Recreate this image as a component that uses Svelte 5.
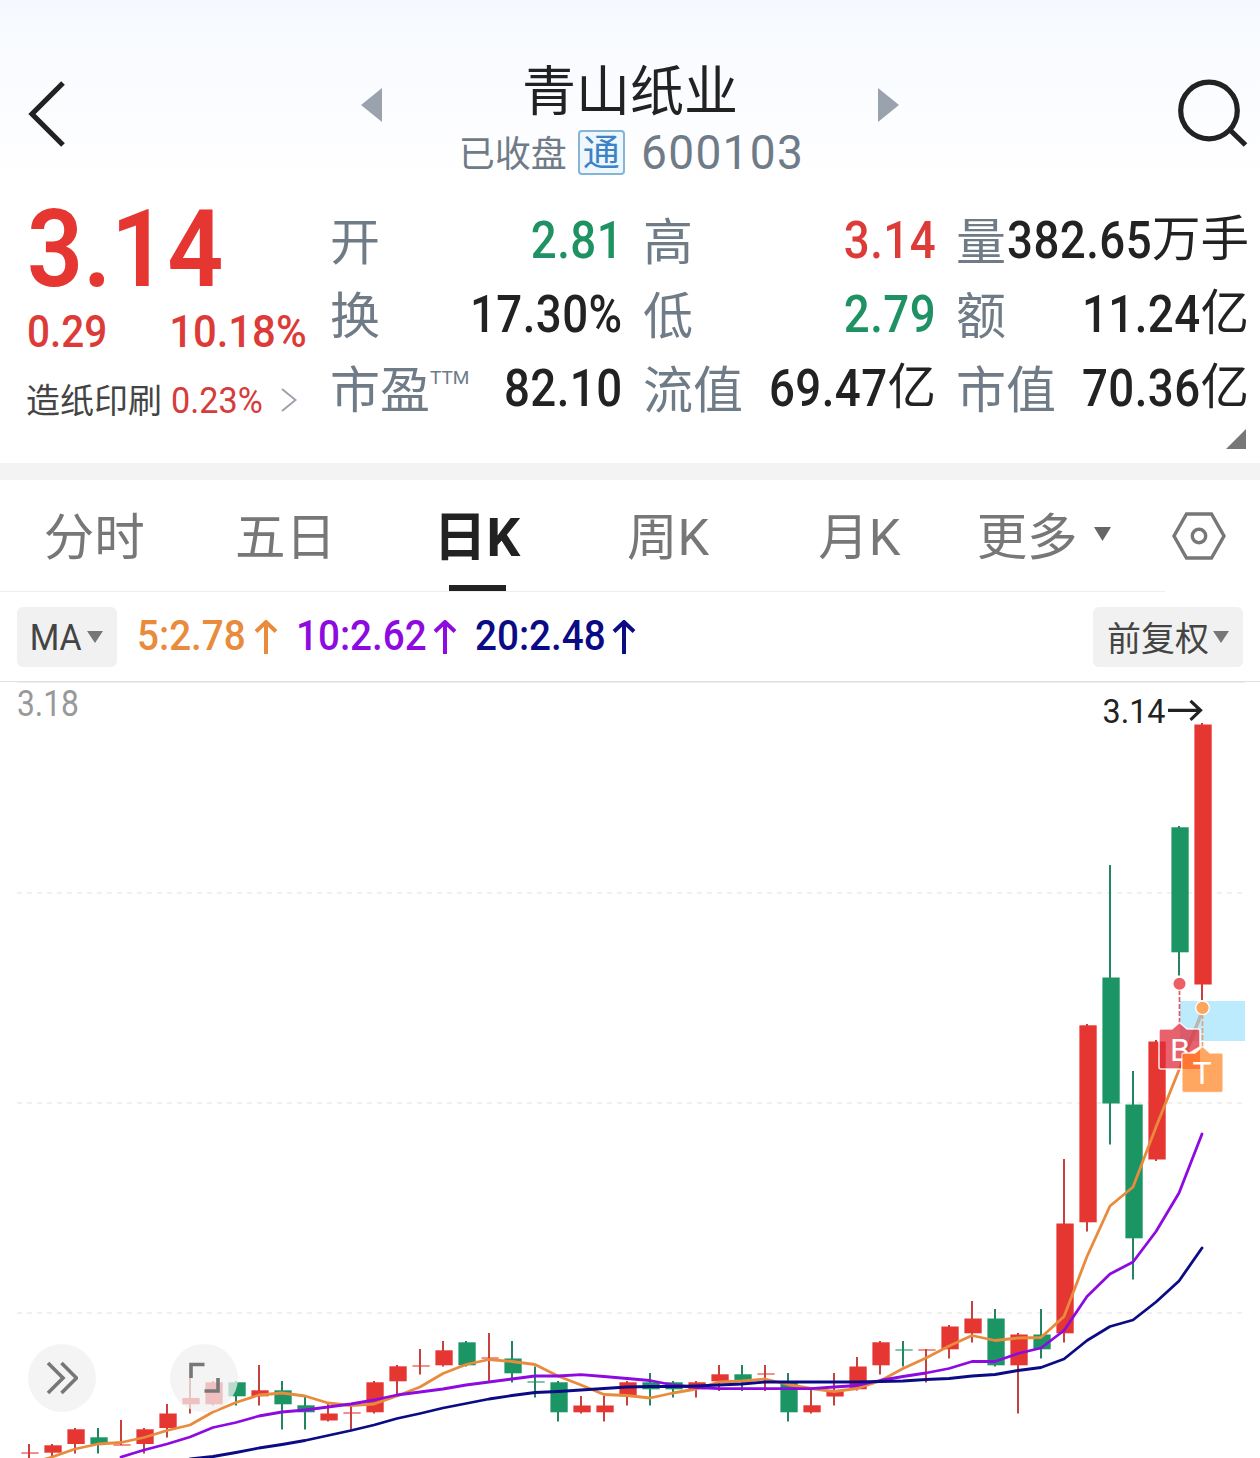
<script lang="ts">
    type Tone = "up" | "down" | "flat";

    const quotes: { label: string; sup?: string; value: string; unit?: string; tone: Tone }[] = [
        { label: "开", value: "2.81", tone: "down" },
        { label: "高", value: "3.14", tone: "up" },
        { label: "量", value: "382.65", unit: "万手", tone: "flat" },
        { label: "换", value: "17.30%", tone: "flat" },
        { label: "低", value: "2.79", tone: "down" },
        { label: "额", value: "11.24", unit: "亿", tone: "flat" },
        { label: "市盈", sup: "TTM", value: "82.10", tone: "flat" },
        { label: "流值", value: "69.47", unit: "亿", tone: "flat" },
        { label: "市值", value: "70.36", unit: "亿", tone: "flat" },
    ];

    const tabs = ["分时", "五日", "日K", "周K", "月K", "更多"];
    let activeTab = $state("日K");

    const averages = [
        { name: "ma5", text: "5:2.78" },
        { name: "ma10", text: "10:2.62" },
        { name: "ma20", text: "20:2.48" },
    ];

    const STEP = 23;
    const FIRST_X = 29;
    const xAt = (i: number) => FIRST_X + i * STEP;

    // [rising, body top, body bottom, high, low]
    const candles: [number, number, number, number, number][] = [
        [1, 1452, 1454, 1444, 1460],
        [1, 1445.3, 1452.7, 1444, 1460],
        [1, 1429.3, 1444, 1428, 1453.5],
        [0, 1437.3, 1444, 1428, 1453.5],
        [1, 1444, 1446, 1420, 1445],
        [1, 1429.3, 1444, 1428, 1453.5],
        [1, 1413.5, 1428, 1404, 1437.5],
        [1, 1398, 1404.3, 1377, 1413.5],
        [1, 1382.3, 1404.3, 1381, 1405.5],
        [0, 1382.3, 1396.3, 1381, 1405.5],
        [1, 1390.3, 1396.3, 1365, 1405.5],
        [0, 1390.3, 1404.3, 1381, 1429.5],
        [0, 1405.3, 1412.3, 1396, 1429.5],
        [1, 1413.5, 1420.5, 1404, 1421.5],
        [1, 1412, 1414, 1406, 1429.5],
        [1, 1382.3, 1412.3, 1381, 1413.5],
        [1, 1366.3, 1381.3, 1365, 1394],
        [1, 1365, 1367, 1349, 1374.5],
        [1, 1350.3, 1365.3, 1341, 1366.5],
        [0, 1342.3, 1365.3, 1341, 1366.5],
        [1, 1357, 1359, 1333, 1381],
        [0, 1358.5, 1373.3, 1341, 1382.5],
        [0, 1381, 1383, 1366.5, 1397.5],
        [0, 1382.3, 1412.3, 1381, 1421.5],
        [1, 1405.5, 1412.3, 1396, 1413.5],
        [1, 1405.5, 1412.3, 1396, 1421.5],
        [1, 1382.3, 1396.3, 1381, 1405.5],
        [0, 1382.3, 1389.3, 1373, 1405.5],
        [0, 1382.3, 1389.3, 1381, 1397.5],
        [1, 1382.3, 1389.3, 1381, 1397.5],
        [1, 1374.3, 1381.3, 1365, 1391],
        [0, 1374.3, 1381.3, 1365, 1391],
        [1, 1373, 1375, 1365, 1391],
        [0, 1382.3, 1412.3, 1373, 1421.5],
        [1, 1405.3, 1412.3, 1389, 1413.5],
        [1, 1390.5, 1396.5, 1373, 1405.5],
        [1, 1366.5, 1389.3, 1357, 1390.5],
        [1, 1342.3, 1365.3, 1341, 1374.5],
        [0, 1349, 1351, 1341, 1366.5],
        [1, 1349, 1351, 1349, 1382.5],
        [1, 1326.5, 1349.3, 1325, 1358.5],
        [1, 1318.5, 1333.3, 1301, 1342.5],
        [0, 1318.5, 1365.3, 1309, 1366.5],
        [1, 1334.5, 1365.3, 1333, 1413.5],
        [0, 1334.5, 1349.3, 1309, 1358.5],
        [1, 1223.5, 1333.3, 1159, 1342.5],
        [1, 1025.3, 1222.3, 1024, 1231.5],
        [0, 977.5, 1103.5, 865, 1144.5],
        [0, 1104.5, 1238.3, 1071, 1279.5],
        [1, 1041.5, 1159.5, 1040, 1161],
        [0, 827.3, 952.3, 826, 975.5],
        [1, 724.5, 984.5, 723, 1000],
    ];

    const ma5 = [
        1464, 1457, 1449, 1444, 1442.5, 1437.5, 1430.5, 1425, 1412, 1402.5, 1395, 1393, 1396, 1403,
        1405.5, 1404, 1396, 1387, 1373.5, 1364.5, 1359.5, 1361.5, 1364.5, 1376, 1385, 1394.5, 1395.5,
        1398, 1393, 1389, 1382, 1381, 1379, 1384.5, 1388.5, 1391.5, 1388.5, 1381, 1368.5, 1358, 1346,
        1335.5, 1340.5, 1338, 1337.5, 1316.5, 1256.5, 1206, 1187, 1127, 1070, 1012,
    ];
    const ma10 = [
        1457, 1450, 1444, 1437, 1427.5, 1422.5, 1416, 1412, 1410, 1407, 1404, 1400, 1395, 1392, 1389,
        1385, 1382, 1379, 1376, 1376, 1374.7, 1376.5, 1378.5, 1380.5, 1385, 1387.5, 1388.7, 1388.7,
        1388.7, 1388.7, 1388.7, 1387, 1385.5, 1380.5, 1376.5, 1373, 1368.5, 1361.5, 1361.5, 1353.5,
        1348, 1330.5, 1296.5, 1274, 1262, 1231.5, 1193, 1134,
    ];
    const ma20 = [
        1459, 1456.5, 1452.5, 1448, 1444.5, 1440.5, 1435.5, 1430.5, 1425, 1418.5, 1413.5, 1408, 1403.5,
        1399, 1395.5, 1392.5, 1391.5, 1390, 1388.5, 1387, 1386.5, 1386.5, 1386, 1385, 1384, 1382, 1382,
        1382, 1382, 1382, 1381.5, 1381, 1379.5, 1378.5, 1376, 1374.5, 1370.5, 1367.5, 1359, 1340.5,
        1326.5, 1320, 1302, 1281, 1248,
    ];

    // Every series ends on the last candle, so shorter ones start further right
    const toPoints = (ys: number[]) =>
        ys.map((y, i) => `${xAt(candles.length - ys.length + i)},${y}`).join(" ");
</script>

<main class="page">
    <header class="header">
        <button class="icon-button back" aria-label="返回">
            <svg width="40" height="68" viewBox="0 0 40 68">
                <path d="M36 3 L5 34 L36 65" class="stroke" />
            </svg>
        </button>
        <div class="stock-nav">
            <svg width="21" height="34" viewBox="0 0 21 34"><path d="M21 0 V34 L0 17 Z" fill="#9aa3ad" /></svg>
            <div class="stock">
                <h1>青山纸业</h1>
                <div class="stock-meta">
                    <span class="status">已收盘</span>
                    <span class="badge">通</span>
                    <span class="code num">600103</span>
                </div>
            </div>
            <svg width="21" height="34" viewBox="0 0 21 34"><path d="M0 0 V34 L21 17 Z" fill="#9aa3ad" /></svg>
        </div>
        <button class="icon-button search" aria-label="搜索">
            <svg width="72" height="68" viewBox="0 0 72 68">
                <circle cx="33" cy="31.5" r="28.3" class="stroke" />
                <path d="M54 51 L69.5 66" class="stroke" />
            </svg>
        </button>
    </header>

    <section class="quote">
        <div class="price-block">
            <div class="price num">3.14</div>
            <div class="change">
                <span class="num">0.29</span>
                <span class="num end">10.18%</span>
            </div>
            <div class="sector">
                <span class="sector-name">造纸印刷</span>
                <span class="sector-change num">0.23%</span>
                <svg width="16" height="24" viewBox="0 0 16 24">
                    <path d="M1 1 L14.5 12 L1 23" fill="none" stroke="#9aa3ad" stroke-width="2" />
                </svg>
            </div>
        </div>
        <div class="quote-grid">
            {#each quotes as q}
                <div class="quote-cell">
                    <span class="label">{q.label}{#if q.sup}<sup>{q.sup}</sup>{/if}</span>
                    <span class="value {q.tone}">
                        <span class="num end">{q.value}</span>{#if q.unit}<span class="unit">{q.unit}</span>{/if}
                    </span>
                </div>
            {/each}
        </div>
        <svg class="expand" width="20" height="20" viewBox="0 0 20 20"><path d="M20 0 V20 H0 Z" fill="#777" /></svg>
    </section>

    <nav class="tabs">
        <div class="tab-list">
            {#each tabs as tab}
                <button
                    class="tab"
                    class:active={tab === activeTab}
                    class:more={tab === "更多"}
                    onclick={() => (activeTab = tab)}
                >
                    <span>{tab}</span>
                    {#if tab === "更多"}
                        <svg width="17" height="14" viewBox="0 0 17 14"><path d="M0 0 H17 L8.5 14 Z" fill="#666" /></svg>
                    {/if}
                </button>
            {/each}
        </div>
        <button class="icon-button settings" aria-label="设置">
            <svg width="54" height="48" viewBox="0 0 54 48">
                <path d="M14.5 2 H39.5 L52 24 L39.5 46 H14.5 L2 24 Z" />
                <circle cx="27" cy="24" r="6.7" />
            </svg>
        </button>
    </nav>

    <div class="indicators">
        <button class="pill">
            <span class="pill-text">MA</span>
            <svg width="16" height="12" viewBox="0 0 16 12"><path d="M0 0 H16 L8 12 Z" fill="#777" /></svg>
        </button>
        <div class="averages">
            {#each averages as ma}
                <span class="average {ma.name}">
                    <span class="num">{ma.text}</span>
                    <svg width="24" height="34" viewBox="0 0 24 34"><path d="M12 34 V3 M2 11.5 L12 2 L22 11.5" /></svg>
                </span>
            {/each}
        </div>
        <button class="pill adjust">
            前复权
            <svg width="16" height="12" viewBox="0 0 16 12"><path d="M0 0 H16 L8 12 Z" fill="#777" /></svg>
        </button>
    </div>

    <div class="chart">
        <svg width="1260" height="776" viewBox="0 682 1260 776">
            <line x1="17" x2="1245" y1="682.5" y2="682.5" stroke="#ececec" />
            {#each [893, 1103, 1313] as y}
                <line x1="17" x2="1243" y1={y} y2={y} class="grid" />
            {/each}
            <text x="17" y="716" textLength="62" lengthAdjust="spacingAndGlyphs" class="axis-label">3.18</text>

            <rect x="1180" y="1001" width="65" height="40" fill="#bdebfe" />

            {#each candles as [rising, top, bottom, high, low], i}
                <g class:thin={bottom - top <= 2} class={rising ? "candle-up" : "candle-down"}>
                    <rect x={xAt(i) - 1} y={high} width="2" height={low - high} class="wick" />
                    <rect x={xAt(i) - 7.6} y={top} width="17.3" height={bottom - top} class="body" />
                </g>
            {/each}

            <polyline points={toPoints(ma5)} class="line ma5" />
            <path d="M1184 1058 L1202 1012" fill="none" stroke="#b9b9b1" stroke-width="3.4" />
            <polyline points={toPoints(ma10)} class="line ma10" />
            <polyline points={toPoints(ma20)} class="line ma20" />

            <text x="1102.5" y="723" textLength="63" lengthAdjust="spacingAndGlyphs" class="high-label">3.14</text>
            <path d="M1168 710.3 H1200 M1190.5 700.8 L1200.5 710.3 L1190.5 719.8" fill="none" stroke="#222" stroke-width="3.2" />

            <!-- trade markers -->
            <line x1="1179.5" x2="1179.5" y1="990" y2="1024" stroke="#dd5a68" stroke-width="1.7" stroke-dasharray="5 2" />
            <circle cx="1179.5" cy="983.7" r="6.7" fill="#ec6064" stroke="#fff" stroke-width="1.3" />
            <path d="M1161 1029 H1172 L1179.5 1022.5 L1187 1029 H1198 Q1200 1029 1200 1031 V1047 L1190 1053 L1182 1061 V1069 H1161 Q1159 1069 1159 1067 V1031 Q1159 1029 1161 1029 Z" fill="#e12c3c" fill-opacity=".75" stroke="#fff" stroke-opacity=".85" stroke-width="1.6" />
            <text x="1180" y="1060.5" class="marker-label">B</text>

            <line x1="1202.5" x2="1202.5" y1="1014" y2="1048" stroke="#e6a268" stroke-width="1.7" stroke-dasharray="5 2" />
            <circle cx="1202.5" cy="1007.8" r="6.8" fill="#ffa45c" stroke="#fff" stroke-width="1.3" />
            <path d="M1184 1053 H1195 L1202.5 1046.5 L1210 1053 H1221 Q1223 1053 1223 1055 V1090.5 Q1223 1092.5 1221 1092.5 H1184 Q1182 1092.5 1182 1090.5 V1055 Q1182 1053 1184 1053 Z" fill="#ff9d50" fill-opacity=".9" stroke="#fff" stroke-opacity=".7" stroke-width="1.4" />
            <path d="M1182.6 1054 H1195 L1200 1050 V1069 H1182.6 Z" fill="#ff5d17" fill-opacity=".65" />
            <text x="1202" y="1084" class="marker-label">T</text>
        </svg>

        <div class="chart-tools">
            <button class="tool" aria-label="快进">
                <svg width="32" height="34" viewBox="0 0 32 34"><path d="M2 2 L17 17 L2 32 M15.5 2 L30.5 17 L15.5 32" /></svg>
            </button>
            <button class="tool" aria-label="全屏">
                <svg width="32" height="34" viewBox="0 0 32 34"><path d="M3 17 V3.5 H16.5 M30 17 V30 H16.5" /></svg>
            </button>
        </div>
    </div>
</main>

<style>
    :global(body) {
        margin: 0;
        background: #fff;
    }

    .page {
        width: 1260px;
        height: 1458px;
        overflow: hidden;
        font-family: Roboto, "Noto Sans CJK SC", sans-serif;
        color: #222;
        background: linear-gradient(#f5f9ff 0, #fbfcff 90px, #fff 190px);
    }

    button {
        margin: 0;
        padding: 0;
        border: 0;
        background: none;
        font: inherit;
        color: inherit;
    }

    svg {
        display: block;
        flex: none;
    }

    /* condensed figures */
    .num {
        display: inline-block;
        transform: scaleX(0.92);
        transform-origin: left;
    }

    .num.end {
        transform-origin: right;
    }

    .header {
        display: grid;
        grid-template-columns: 1fr auto 1fr;
        height: 190px;
        box-sizing: border-box;
        padding: 56px 12px 0 27px;
    }

    .icon-button {
        display: flex;
    }

    .back {
        padding-top: 24px;
    }

    .search {
        justify-self: end;
        padding-top: 23px;
    }

    .stroke {
        fill: none;
        stroke: #222;
        stroke-width: 5.2;
    }

    .stock-nav {
        display: flex;
        align-items: flex-start;
        margin-right: 15px;
    }

    .stock-nav > svg {
        margin-top: 32px;
    }

    .stock {
        width: 496px;
        text-align: center;
    }

    h1 {
        margin: 0;
        padding-top: 3px;
        font-size: 54px;
        line-height: 67px;
        height: 65px;
        font-weight: 400;
    }

    .stock-meta {
        display: flex;
        justify-content: center;
        align-items: center;
        height: 56px;
        padding-left: 2px;
        color: #6f7b87;
    }

    .status {
        margin-top: -2px;
        font-size: 36px;
    }

    .badge {
        box-sizing: border-box;
        width: 47px;
        height: 45px;
        margin: 0 16px 0 11px;
        border: 2px solid #85b4d6;
        border-radius: 4px;
        background: #edf7fd;
        color: #3c82c4;
        font-size: 37px;
        line-height: 44px;
    }

    .code {
        margin-right: -11px;
        font-size: 49px;
        letter-spacing: 1.4px;
        transform: scaleX(0.94);
    }

    .quote {
        position: relative;
        display: flex;
        height: 273px;
        box-sizing: border-box;
        padding: 0 11px 0 27px;
    }

    .price-block {
        width: 304px;
        color: #e53632;
    }

    .price {
        height: 119px;
        font-size: 108px;
        line-height: 119px;
        font-weight: 600;
        transform: scaleX(0.91);
    }

    .change {
        display: flex;
        justify-content: space-between;
        width: 280px;
        font-size: 44px;
        line-height: 46px;
        font-weight: 500;
        color: #dc3b38;
    }

    .change .num {
        transform: scaleX(0.92);
    }

    .change .num.end {
        transform: scaleX(0.95);
    }

    .sector {
        display: flex;
        align-items: center;
        height: 76px;
        margin-top: 7px;
        font-size: 34px;
        color: #444;
    }

    .sector-name {
        margin: -4px 0 0 -1px;
    }

    .sector-change {
        margin: 2px 13px 0 9px;
        font-size: 36px;
        color: #d63c3c;
        transform: scaleX(0.95);
    }

    .quote-grid {
        display: grid;
        grid-template-columns: repeat(3, 291px);
        grid-auto-rows: 74px;
        column-gap: 22px;
        padding-top: 14px;
    }

    .quote-cell {
        display: flex;
        justify-content: space-between;
        align-items: center;
        white-space: nowrap;
    }

    .label {
        display: flex;
        margin: 4px 0 0 -1px;
        font-size: 50px;
        line-height: 74px;
        color: #6f7b87;
    }

    .label sup {
        margin-top: -13px;
        font-size: 19px;
        line-height: 74px;
    }

    .value {
        display: flex;
        justify-content: flex-end;
        width: 0;
        margin-right: -1px;
        font-size: 51px;
        line-height: 74px;
        font-weight: 500;
    }

    .value .num {
        transform: scaleX(0.895);
        letter-spacing: 0.5px;
    }

    .unit {
        margin-top: -1px;
        font-size: 48.5px;
        font-weight: 400;
    }

    .up {
        color: #dc3b38;
    }

    .down {
        color: #1f9263;
    }

    .expand {
        position: absolute;
        right: 14px;
        bottom: 14px;
    }

    .tabs {
        display: flex;
        height: 112px;
        border-top: 17px solid #f3f3f3;
    }

    .tab-list {
        display: flex;
        width: 1165px;
        box-sizing: border-box;
        border-bottom: 1px solid #eee;
    }

    .tab {
        position: relative;
        display: flex;
        justify-content: center;
        align-items: center;
        gap: 16px;
        width: 191.3px;
        box-sizing: border-box;
        padding-right: 3px;
        font-size: 50.5px;
        color: #777;
    }

    .tab span {
        margin-top: -5px;
    }

    .tab.active {
        font-size: 53px;
        font-weight: 700;
        color: #222;
    }

    .tab.active::after {
        content: "";
        position: absolute;
        bottom: 0;
        left: 66px;
        width: 57px;
        height: 6px;
        background: #222;
    }

    .tab.more {
        padding-right: 17px;
    }

    .more svg {
        margin-top: -3px;
    }

    .settings {
        align-items: center;
        margin-left: 7px;
    }

    .settings svg {
        fill: none;
        stroke: #777;
        stroke-width: 3.4;
    }

    .indicators {
        display: flex;
        align-items: center;
        height: 90px;
        box-sizing: border-box;
        padding: 0 17px;
        border-bottom: 1px solid #e2e2e2;
    }

    .pill {
        display: flex;
        align-items: center;
        justify-content: center;
        gap: 4px;
        width: 100px;
        height: 60px;
        border-radius: 6px;
        background: #f1f1f1;
        font-size: 36px;
        color: #444;
    }

    .pill-text {
        margin: 3px -1px 0 -3px;
        transform: scaleX(0.94);
    }

    .adjust {
        width: 150px;
        margin-left: auto;
        font-size: 34px;
    }

    .averages {
        display: flex;
        gap: 18px;
        margin-left: 20px;
    }

    .average {
        display: flex;
        align-items: center;
        gap: 10px;
        font-size: 42px;
        font-weight: 500;
    }

    .average .num {
        margin: -2px -15px 0 0;
    }

    .average.ma5 .num {
        margin-right: -11px;
    }

    .average svg {
        fill: none;
        stroke: currentColor;
        stroke-width: 4;
    }

    .ma5 {
        color: #e98b3d;
    }

    .ma10 {
        color: #8d0be0;
    }

    .ma20 {
        color: #0b0b85;
    }

    .chart {
        position: relative;
        height: 776px;
    }

    .grid {
        stroke: #ececec;
        stroke-width: 1.6;
        stroke-dasharray: 5 5;
    }

    .axis-label {
        font-size: 36px;
        fill: #999;
    }

    .high-label {
        font-size: 34px;
        fill: #222;
    }

    .candle-up .body {
        fill: #e53632;
    }

    .candle-up .wick {
        fill: #c5423f;
    }

    .candle-down .body {
        fill: #1c9565;
    }

    .candle-down .wick {
        fill: #23855f;
    }

    .thin .body {
        opacity: 0.55;
    }

    .line {
        fill: none;
        stroke: currentColor;
        stroke-width: 2.8;
        stroke-linejoin: round;
        stroke-linecap: round;
    }

    .marker-label {
        font-size: 32px;
        text-anchor: middle;
        fill: #fff;
    }

    .chart-tools {
        position: absolute;
        left: 28px;
        bottom: 46px;
        display: flex;
        gap: 74px;
    }

    .tool {
        display: flex;
        align-items: center;
        justify-content: center;
        width: 68px;
        height: 68px;
        border-radius: 50%;
        background: rgba(240, 240, 240, 0.75);
    }

    .tool svg {
        fill: none;
        stroke: #777;
        stroke-width: 3.6;
    }
</style>
